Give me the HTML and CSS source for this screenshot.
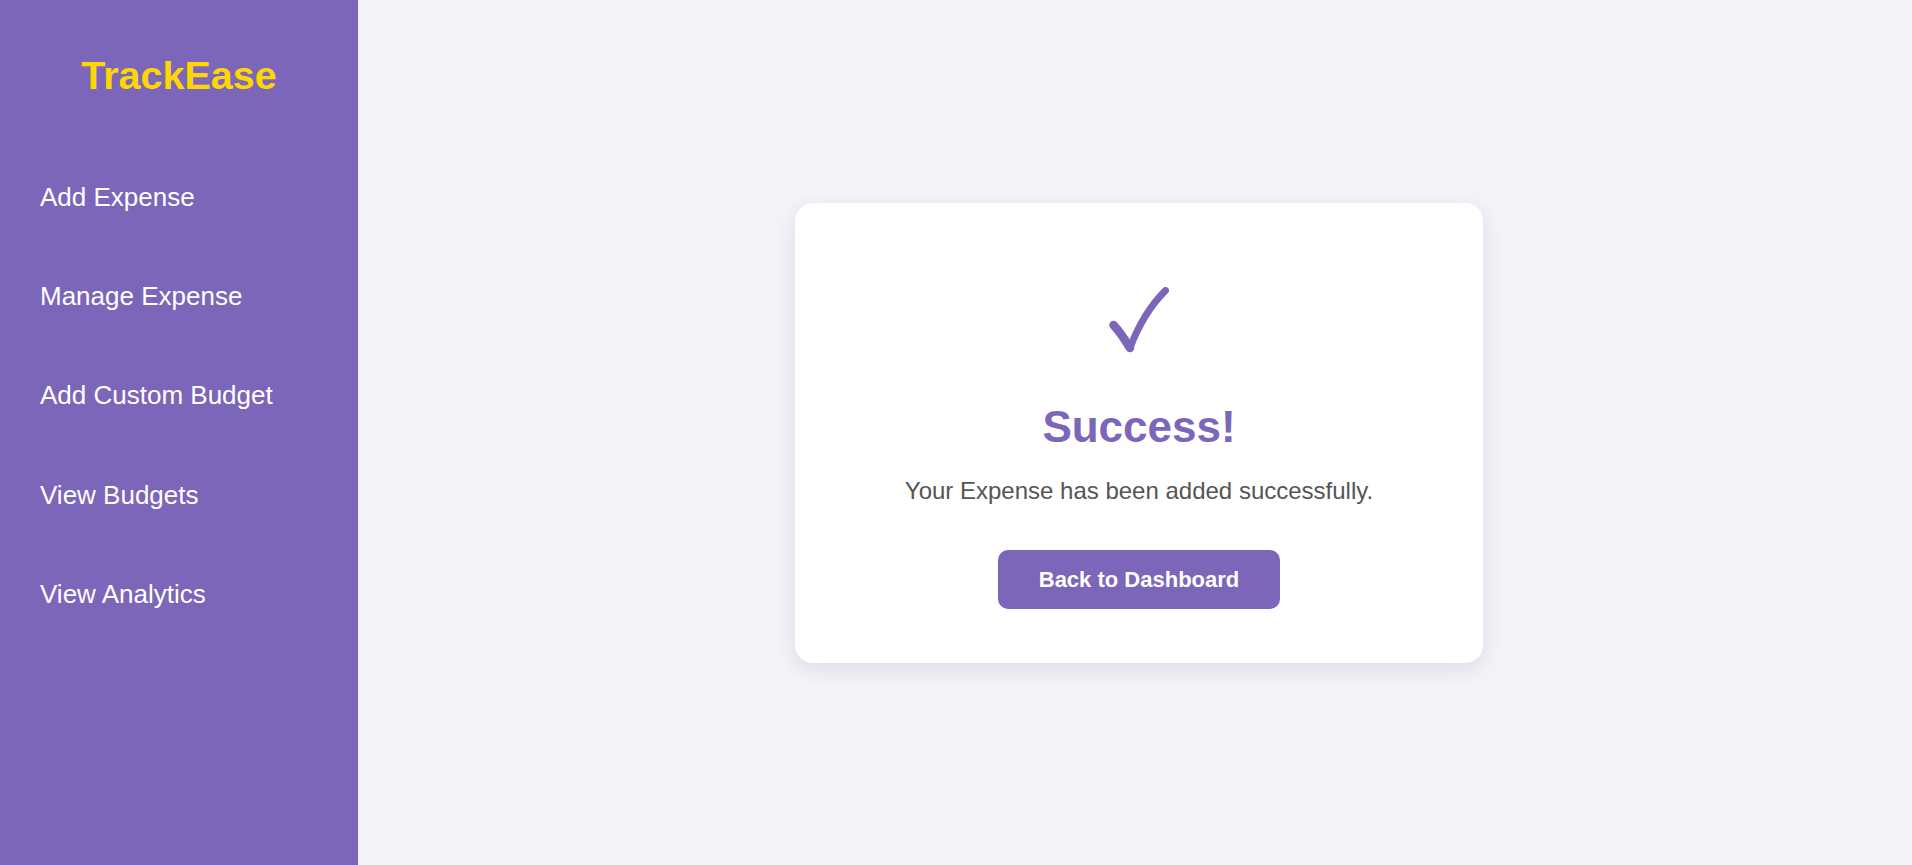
FILE: index.html
```html
<!DOCTYPE html>
<html lang="en">
<head>
<meta charset="utf-8">
<title>TrackEase - Success</title>
<link rel="stylesheet" href="styles.css">
</head>
<body>
  <aside class="sidebar">
    <h2 class="brand">TrackEase</h2>
    <nav class="nav">
      <a class="nav-link" href="#">Add Expense</a>
      <a class="nav-link" href="#">Manage Expense</a>
      <a class="nav-link" href="#">Add Custom Budget</a>
      <a class="nav-link" href="#">View Budgets</a>
      <a class="nav-link" href="#">View Analytics</a>
    </nav>
  </aside>
  <main class="main">
    <section class="card">
      <svg class="check" width="60" height="66" viewBox="0 0 60 66" aria-hidden="true">
        <path d="M4.5 38 Q12 46 21 61" fill="none" stroke="#7b66ba" stroke-width="8.5" stroke-linecap="round"/>
        <path d="M21 61 Q34 26 56.5 3.5" fill="none" stroke="#7b66ba" stroke-width="7" stroke-linecap="round"/>
      </svg>
      <h1 class="title">Success!</h1>
      <p class="message">Your Expense has been added successfully.</p>
      <a class="btn" href="#">Back to Dashboard</a>
    </section>
  </main>
</body>
</html>
```

FILE: styles.css
```css
* {
  box-sizing: border-box;
}

html, body {
  margin: 0;
  padding: 0;
  height: 100%;
}

body {
  display: flex;
  font-family: "Liberation Sans", Arial, sans-serif;
  background: #f4f3f8;
  overflow: hidden;
}

.sidebar {
  width: 358px;
  flex-shrink: 0;
  height: 100vh;
  background: #7b66ba;
  padding-top: 53px;
  display: flex;
  flex-direction: column;
}

.brand {
  margin: 0;
  text-align: center;
  color: #ffd700;
  font-size: 39.5px;
  line-height: 44px;
  font-weight: bold;
}

.nav {
  margin-top: 85.3px;
  display: flex;
  flex-direction: column;
  gap: 69.1px;
  padding-left: 40px;
}

.nav-link {
  color: #ffffff;
  text-decoration: none;
  font-size: 26px;
  line-height: 30px;
}

.main {
  flex: 1;
  display: flex;
  align-items: center;
  justify-content: center;
  padding-left: 8px;
}

.card {
  width: 688px;
  background: #ffffff;
  border-radius: 18px;
  box-shadow: 0 6px 20px rgba(60, 50, 100, 0.12);
  padding: 84px 20px 54px;
  display: flex;
  flex-direction: column;
  align-items: center;
}

.check {
  display: block;
  margin-left: -1px;
}

.title {
  margin: 49.5px 0 0;
  color: #7b66ba;
  font-size: 44px;
  line-height: 50px;
  font-weight: bold;
}

.message {
  margin: 24.5px 0 0;
  color: #555555;
  font-size: 24px;
  line-height: 28px;
}

.btn {
  margin-top: 45px;
  display: inline-block;
  background: #7b66ba;
  color: #ffffff;
  text-decoration: none;
  font-size: 22px;
  font-weight: bold;
  line-height: 25px;
  padding: 17px 41px;
  border-radius: 10px;
}
```
